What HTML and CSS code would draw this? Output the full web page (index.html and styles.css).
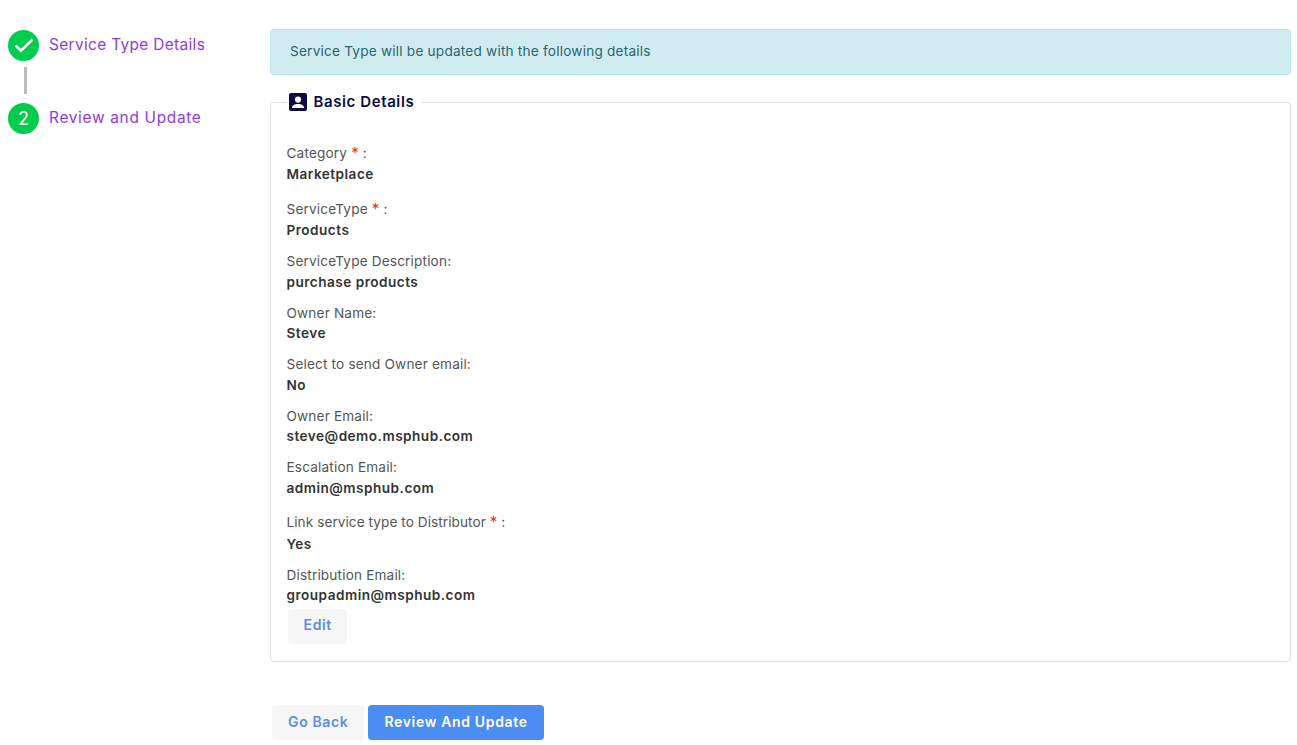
FILE: index.html
```html
<!DOCTYPE html>
<html lang="en">
<head>
<meta charset="utf-8">
<title>Update Service Type</title>
<link rel="stylesheet" href="styles.css">
</head>
<body>
<div class="page">
  <aside class="stepper">
    <div class="step">
      <span class="badge"><svg class="check" viewBox="0 0 20 20" width="20" height="20"><path d="M1.500 10.500l5.500 5.200L18.500 4.500" fill="none" stroke="#fff" stroke-width="2.600"/></svg></span>
      <span class="step-label">Service Type Details</span>
    </div>
    <div class="connector"></div>
    <div class="step">
      <span class="badge">2</span>
      <span class="step-label step-label-wide">Review and Update</span>
    </div>
  </aside>
  <main class="content">
    <div class="alert">Service Type will be updated with the following details</div>
    <fieldset class="panel">
      <legend class="panel-title">
        <svg class="person" viewBox="0 0 18 18" width="18" height="18"><path fill="#0b0b45" d="M2 0h14a2 2 0 0 1 2 2v14a2 2 0 0 1-2 2H2a2 2 0 0 1-2-2V2a2 2 0 0 1 2-2z"/><circle cx="9" cy="6.600" r="3.100" fill="#fff"/><path fill="#fff" d="M3 15c0-2.600 2.600-4 6-4s6 1.400 6 4z"/></svg>
        Basic Details
      </legend>
      <div class="field req"><div class="label">Category <span class="star">*</span> :</div><div class="value">Marketplace</div></div>
      <div class="field req"><div class="label">ServiceType <span class="star">*</span> :</div><div class="value">Products</div></div>
      <div class="field"><div class="label">ServiceType Description:</div><div class="value">purchase products</div></div>
      <div class="field"><div class="label">Owner Name:</div><div class="value">Steve</div></div>
      <div class="field"><div class="label">Select to send Owner email:</div><div class="value">No</div></div>
      <div class="field"><div class="label">Owner Email:</div><div class="value">steve@demo.msphub.com</div></div>
      <div class="field"><div class="label">Escalation Email:</div><div class="value">admin@msphub.com</div></div>
      <div class="field req"><div class="label label-tight">Link service type to Distributor <span class="star">*</span> :</div><div class="value">Yes</div></div>
      <div class="field last"><div class="label">Distribution Email:</div><div class="value">groupadmin@msphub.com</div></div>
      <button class="btn btn-light btn-edit" type="button">Edit</button>
    </fieldset>
    <div class="actions">
      <button class="btn btn-light" type="button">Go Back</button>
      <button class="btn btn-primary" type="button">Review And Update</button>
    </div>
  </main>
</div>
</body>
</html>
```
FILE: styles.css
```css
* { box-sizing: border-box; }
html, body { margin: 0; height: 745px; overflow: hidden; }
body { background: #fff; font-family: Inter, "Liberation Sans", sans-serif; color: #333; }
.page { display: flex; padding: 29px 6px 0 8px; }
.stepper { width: 262px; flex: none; }
.step { display: flex; align-items: center; gap: 10px; height: 32px; }
.badge { width: 31px; height: 31px; border-radius: 50%; background: #00cc4e; color: #fff; font-size: 18px; display: flex; align-items: center; justify-content: center; flex: none; }
.step-label { color: #8a3ce6; font-size: 15.400px; letter-spacing: 0.35px; padding-bottom: 2px; }
.step-label-wide { letter-spacing: 0.7px; }
.connector { width: 3px; height: 27px; background: #bbb; margin: 6px 0 8px 16px; }
.content { flex: 1; min-width: 0; }
.alert { height: 46px; background: #d1ecf1; border: 1px solid #bee5eb; border-radius: 4px; color: #2a6570; font-size: 13.600px; letter-spacing: 0.22px; padding: 0 19px 2px; display: flex; align-items: center; }
.panel { margin: 17px 0 0; border: 1px solid #dee2e6; border-radius: 4px; padding: 27px 15.500px 17px 15.500px; height: 570px; }
.panel-title { padding: 0 7px 0 2px; margin-left: 0; display: flex; align-items: center; gap: 7px; font-size: 15px; letter-spacing: 0.6px; font-weight: 600; color: #0b0b45; line-height: 20px; }
.field { margin-bottom: 10.500px; line-height: 20.500px; }
.label { font-size: 13.600px; letter-spacing: 0.17px; font-weight: 400; color: #555; }
.label-tight { letter-spacing: 0.07px; }
.value { font-size: 13.600px; letter-spacing: 0.48px; font-weight: 600; color: #333; }
.req { padding-top: 2.500px; }
.req .label { line-height: 22.500px; }
.star { color: #f22; font-size: 15px; }
.last { margin-bottom: 3.500px; }
.btn { border: 0; border-radius: 4px; font-family: inherit; font-size: 14px; letter-spacing: 0.65px; font-weight: 600; height: 35px; padding: 0 16px 2px; }
.btn-light { background: #f6f6f6; color: #5b8def; }
.btn-primary { background: #4b8df0; color: #fff; }
.btn-edit { display: block; margin-left: 1.500px; padding: 0 15.500px 4px; }
.actions { display: flex; gap: 4px; margin: 43px 0 0 2px; }
```
